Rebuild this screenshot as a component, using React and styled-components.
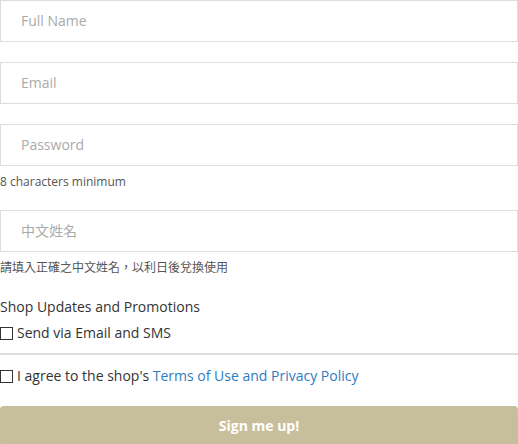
import React from "react";
import styled, { createGlobalStyle } from "styled-components";

const GlobalStyle = createGlobalStyle`
  html, body {
    margin: 0;
    padding: 0;
    background: #ffffff;
  }
  body {
    font-family: "Open Sans", "Noto Sans CJK TC", sans-serif;
    color: #333333;
  }
`;

const Form = styled.form`
  width: 518px;
  display: flex;
  flex-direction: column;
`;

const Field = styled.div`
  display: flex;
  flex-direction: column;
  margin-bottom: 20px;
`;

const Input = styled.input`
  box-sizing: border-box;
  width: 100%;
  height: 42px;
  margin: 0;
  padding: 0 20px 1px;
  border: 1px solid #dddddd;
  border-radius: 0;
  background: #ffffff;
  font-family: "Open Sans", "Noto Sans CJK TC", sans-serif;
  font-size: 14px;
  color: #333333;
  outline: none;

  &::placeholder {
    color: #aaaaaa;
  }
`;

const Hint = styled.div`
  margin-top: 8px;
  font-size: 12px;
  line-height: 16px;
  color: #555555;
  font-family: "Open Sans", "Noto Sans CJK TC", sans-serif;
`;

const SectionTitle = styled.div`
  font-size: 14px;
  line-height: 20px;
  color: #333333;
  margin-top: 1px;
`;

const CheckRow = styled.label`
  display: flex;
  align-items: center;
  gap: 4px;
  font-size: 14px;
  line-height: 20px;
  color: #333333;
  margin-top: ${(p) => p.$top || "0"};
`;

const Box = styled.input`
  appearance: none;
  box-sizing: border-box;
  width: 13px;
  height: 13px;
  margin: 0;
  border: 1px solid #333333;
  background: #ffffff;
  flex: none;
`;

const Divider = styled.hr`
  border: none;
  border-top: 2px solid #dddddd;
  margin: 10px 0 11px;
`;

const Link = styled.a`
  color: #2f7bbf;
  text-decoration: none;
`;

const SubmitButton = styled.button`
  margin-top: 20px;
  height: 40px;
  width: 100%;
  padding: 0 0 1px;
  border: none;
  border-radius: 4px;
  background: #c7bf9b;
  color: #ffffff;
  font-family: "Open Sans", sans-serif;
  font-weight: 700;
  font-size: 14px;
  cursor: pointer;
`;

const App = () => {
  return (
    <>
      <GlobalStyle />
      <Form onSubmit={(e) => e.preventDefault()}>
        <Field>
          <Input type="text" placeholder="Full Name" />
        </Field>
        <Field>
          <Input type="email" placeholder="Email" />
        </Field>
        <Field>
          <Input type="password" placeholder="Password" />
          <Hint>8 characters minimum</Hint>
        </Field>
        <Field>
          <Input type="text" placeholder="中文姓名" />
          <Hint>請填入正確之中文姓名，以利日後兌換使用</Hint>
        </Field>
        <SectionTitle>Shop Updates and Promotions</SectionTitle>
        <CheckRow $top="6px">
          <Box type="checkbox" />
          <span>Send via Email and SMS</span>
        </CheckRow>
        <Divider />
        <CheckRow>
          <Box type="checkbox" />
          <span>
            I agree to the shop's <Link href="#">Terms of Use and Privacy Policy</Link>
          </span>
        </CheckRow>
        <SubmitButton type="submit">Sign me up!</SubmitButton>
      </Form>
    </>
  );
};

export default App;
